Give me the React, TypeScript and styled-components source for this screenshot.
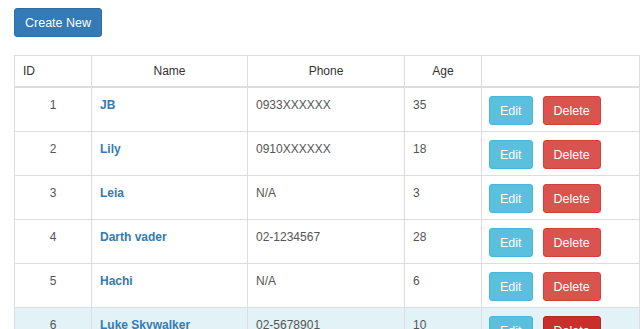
import { FC } from "react";
import styled, { createGlobalStyle } from "styled-components";

type Person = {
  id: number;
  name: string;
  phone: string;
  age: number;
};

const PEOPLE: Person[] = [
  { id: 1, name: "JB", phone: "0933XXXXXX", age: 35 },
  { id: 2, name: "Lily", phone: "0910XXXXXX", age: 18 },
  { id: 3, name: "Leia", phone: "N/A", age: 3 },
  { id: 4, name: "Darth vader", phone: "02-1234567", age: 28 },
  { id: 5, name: "Hachi", phone: "N/A", age: 6 },
  { id: 6, name: "Luke Skywalker", phone: "02-5678901", age: 10 },
];

const GlobalStyle = createGlobalStyle`
  body {
    margin: 0;
    font-family: "Liberation Sans", Arial, sans-serif;
    color: #333;
    background: #fff;
  }
`;

const Page = styled.div`
  padding: 8px 14px;
`;

const Button = styled.button<{ $variant: "primary" | "info" | "danger"; $hover?: boolean }>`
  height: 29px;
  padding: 0 10px;
  font-family: "Liberation Sans", Arial, sans-serif;
  font-size: 12.5px;
  color: #fff;
  border-radius: 3px;
  cursor: pointer;
  border: 1px solid;
  ${({ $variant, $hover }) =>
    $variant === "primary"
      ? "background-color: #337ab7; border-color: #2e6da4;"
      : $variant === "info"
      ? "background-color: #5bc0de; border-color: #46b8da;"
      : $hover
      ? "background-color: #c9302c; border-color: #ac2925;"
      : "background-color: #d9534f; border-color: #d43f3a;"}
`;

const Table = styled.table`
  margin-top: 18px;
  width: 625px;
  border-collapse: collapse;
  font-size: 12px;
  table-layout: fixed;
`;

const HeadCell = styled.th<{ $align?: "left" | "center"; $width: number }>`
  box-sizing: border-box;
  width: ${({ $width }) => $width}px;
  padding: 7px 8px 6px;
  line-height: 17px;
  font-weight: normal;
  color: #333;
  text-align: ${({ $align }) => $align || "center"};
  border: 1px solid #ddd;
  border-bottom-width: 2px;
`;

const Row = styled.tr<{ $active?: boolean }>`
  background-color: ${({ $active }) => ($active ? "#e2f2f7" : "#fff")};
`;

const Cell = styled.td<{ $center?: boolean }>`
  padding: 8px 8px 6px;
  height: 29px;
  line-height: 19px;
  vertical-align: top;
  color: #555;
  white-space: nowrap;
  text-align: ${({ $center }) => ($center ? "center" : "left")};
  border: 1px solid #ddd;
`;

const NameLink = styled.a`
  color: #337ab7;
  font-weight: bold;
  text-decoration: none;
`;

const Actions = styled.div`
  display: flex;
  gap: 10px;
  margin-left: -1px;
`;

const PersonRow: FC<{ person: Person; active?: boolean }> = ({ person, active }) => (
  <Row $active={active}>
    <Cell $center>{person.id}</Cell>
    <Cell>
      <NameLink href="#">{person.name}</NameLink>
    </Cell>
    <Cell>{person.phone}</Cell>
    <Cell>{person.age}</Cell>
    <Cell>
      <Actions>
        <Button $variant="info">Edit</Button>
        <Button $variant="danger" $hover={active}>
          Delete
        </Button>
      </Actions>
    </Cell>
  </Row>
);

const App = () => {
  return (
    <>
      <GlobalStyle />
      <Page>
        <Button $variant="primary">Create New</Button>
        <Table>
          <thead>
            <tr>
              <HeadCell $align="left" $width={77}>ID</HeadCell>
              <HeadCell $width={156}>Name</HeadCell>
              <HeadCell $width={157}>Phone</HeadCell>
              <HeadCell $width={77}>Age</HeadCell>
              <HeadCell $width={158} />
            </tr>
          </thead>
          <tbody>
            {PEOPLE.map((person, index) => (
              <PersonRow key={person.id} person={person} active={index === PEOPLE.length - 1} />
            ))}
          </tbody>
        </Table>
      </Page>
    </>
  );
};

export default App;
